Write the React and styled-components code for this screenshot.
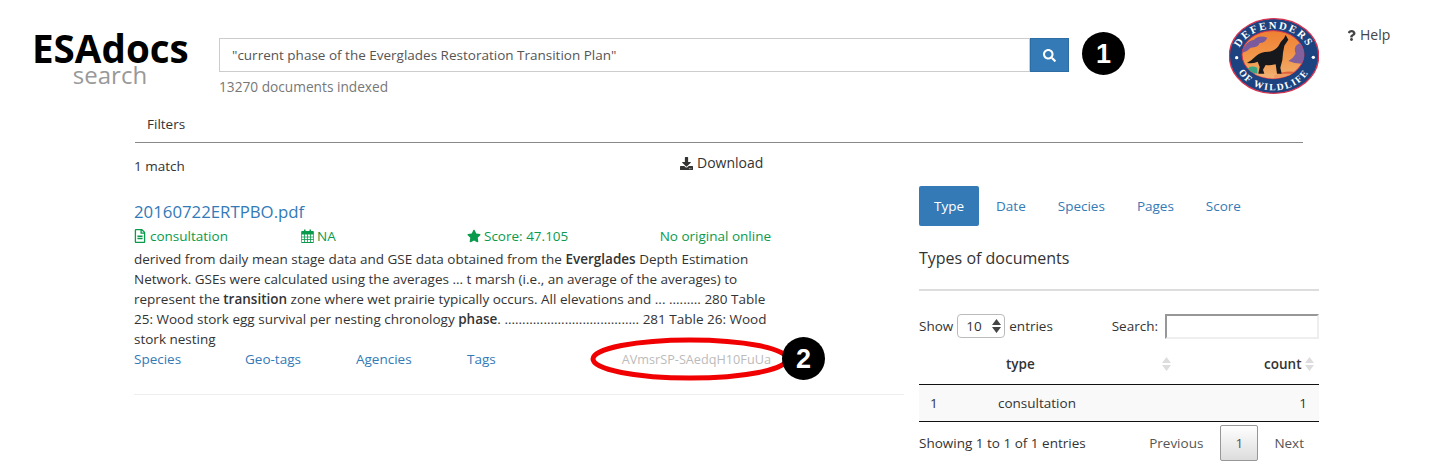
import React from 'react';
import styled, { createGlobalStyle } from 'styled-components';
import { FaSearch, FaRegFileAlt, FaStar, FaDownload, FaQuestion } from 'react-icons/fa';

const GlobalStyle = createGlobalStyle`
  html, body {
    margin: 0;
    background: #fff;
  }
  body {
    font-family: "Open Sans", "Liberation Sans", sans-serif;
    font-size: 13.5px;
    line-height: 20px;
    color: #333;
  }
`;

const Page = styled.div`
  position: relative;
  width: 1434px;
  height: 476px;
  overflow: hidden;
`;

const Header = styled.header`
  display: flex;
  align-items: flex-start;
  height: 104px;
  padding-left: 32px;
`;

const Brand = styled.div`
  width: 156px;
  margin-top: 26px;
  margin-right: 31px;
  text-align: center;
`;

const BrandName = styled.div`
  font-size: 38.6px;
  font-weight: 700;
  line-height: 44px;
  color: #000;
  white-space: nowrap;
`;

const BrandSub = styled.div`
  margin-top: -9px;
  font-size: 24px;
  line-height: 28px;
  color: #999;
`;

const SearchArea = styled.div`
  width: 850px;
  margin-top: 38px;
`;

const SearchRow = styled.div`
  display: flex;
`;

const SearchInput = styled.div`
  box-sizing: border-box;
  width: 811px;
  height: 34px;
  padding: 6px 12px;
  border: 1px solid #ccc;
  color: #555;
  white-space: nowrap;
`;

const SearchButton = styled.button`
  display: flex;
  align-items: center;
  justify-content: center;
  width: 39px;
  height: 34px;
  padding: 0;
  border: 1px solid #2e6da4;
  background: #337ab7;
  color: #fff;
  font-size: 13px;
`;

const Indexed = styled.div`
  margin-top: 5px;
  font-size: 13.7px;
  color: #777;
`;

const Badge = styled.div`
  display: flex;
  align-items: center;
  justify-content: center;
  flex: none;
  width: 43px;
  height: 43px;
  border-radius: 50%;
  background: #000;
  color: #fff;
  font-family: "Liberation Sans", Arial, sans-serif;
  font-size: 27px;
  font-weight: 700;
`;

const FirstBadge = styled(Badge)`
  margin-top: 32px;
  margin-left: 13px;
`;

const DefendersLogo = styled.svg`
  flex: none;
  width: 90px;
  height: 76px;
  margin-top: 18px;
  margin-left: 104px;
`;

const Help = styled.div`
  display: flex;
  align-items: center;
  gap: 3px;
  margin-top: 25px;
  margin-left: 27px;
  font-size: 14px;
  color: #444;
`;

const FilterBar = styled.div`
  width: 1168px;
  height: 38px;
  margin-left: 135px;
  border-bottom: 1px solid #888;
`;

const FilterTab = styled.div`
  padding: 10px 12px;
`;

const Main = styled.main`
  display: flex;
  margin-left: 134px;
`;

const ResultsColumn = styled.section`
  width: 770px;
  margin-right: 15px;
`;

const CountRow = styled.div`
  display: flex;
  width: 637px;
  height: 59px;
`;

const MatchCount = styled.div`
  width: 546px;
  padding-top: 13px;
`;

const Download = styled.div`
  display: flex;
  align-items: center;
  gap: 4px;
  height: 20px;
  padding-top: 10px;
  font-size: 14px;
`;

const Result = styled.article`
  height: 192px;
  border-bottom: 1px solid #eee;
`;

const ResultBody = styled.div`
  width: 637px;
`;

const Title = styled.a`
  display: block;
  font-size: 16.8px;
  line-height: 20px;
  color: #337ab7;
`;

const MetaRow = styled.div`
  display: grid;
  grid-template-columns: 167px 166px 1fr auto;
  margin-top: 4px;
  color: #0a9a4b;
`;

const MetaItem = styled.span`
  display: flex;
  align-items: center;
  gap: 3px;
`;

const FileIcon = styled(FaRegFileAlt)`
  width: 12px;
  height: 14px;
  margin-right: 1px;
`;

const CalendarIcon = styled.svg`
  width: 13px;
  height: 14px;
`;

const Snippet = styled.p`
  margin: 3px 0 0;
`;

const Hit = styled.b`
  font-weight: 600;
`;

const LinkRow = styled.div`
  display: grid;
  grid-template-columns: 111px 111px 111px 1fr auto;
  align-items: center;
`;

const TextLink = styled.a`
  color: #337ab7;
`;

const DocId = styled.span`
  font-size: 12.7px;
  color: #bbb;
`;

const StatsColumn = styled.aside`
  width: 400px;
  margin-top: 43px;
`;

const Pills = styled.nav`
  display: flex;
  gap: 2px;
`;

const Pill = styled.a`
  padding: 10px 15px;
  border-radius: 2px;
  color: ${(p) => (p.$active ? '#fff' : '#337ab7')};
  background: ${(p) => (p.$active ? '#337ab7' : 'transparent')};
`;

const StatsTitle = styled.h3`
  margin: 21px 0 0;
  padding-bottom: 20px;
  border-bottom: 2px solid #ddd;
  font-size: 16px;
  font-weight: 400;
  line-height: 22px;
`;

const TableTools = styled.div`
  display: flex;
  justify-content: space-between;
  align-items: center;
  margin-top: 22px;
  height: 26px;
`;

const ToolGroup = styled.label`
  display: flex;
  align-items: center;
  gap: 4px;
`;

const LengthSelect = styled.div`
  display: flex;
  align-items: center;
  justify-content: space-between;
  box-sizing: border-box;
  width: 48px;
  height: 24px;
  padding: 0 3px 0 8px;
  border: 1px solid #bbb;
  border-radius: 4px;
`;

const TableSearch = styled.input`
  box-sizing: border-box;
  width: 154px;
  height: 25px;
  margin-left: 3px;
  border: 2px solid;
  border-color: #979797 #eee #eee #979797;
  background: #fff;
`;

const Table = styled.table`
  width: 400px;
  margin-top: 6px;
  border-collapse: collapse;
  border-bottom: 1px solid #111;
`;

const HeadCell = styled.th`
  width: ${(p) => p.$width || 'auto'};
  height: 37px;
  padding: 0 0 2px;
  border-bottom: 1px solid #111;
  font-weight: 600;
  text-align: left;
`;

const HeadInner = styled.span`
  display: flex;
  align-items: center;
  justify-content: ${(p) => p.$justify || 'flex-start'};
  padding: ${(p) => p.$padding || '0'};
`;

const Row = styled.tr`
  background: #f9f9f9;
`;

const Cell = styled.td`
  height: 36px;
  padding: ${(p) => p.$padding || '0'};
  text-align: ${(p) => p.$align || 'left'};
`;

const TableFooter = styled.div`
  display: flex;
  justify-content: space-between;
  align-items: center;
  margin-top: 3px;
`;

const Pager = styled.div`
  display: flex;
  align-items: center;
`;

const PageLink = styled.span`
  padding: 0 15px;
  color: #555;
`;

const CurrentPage = styled.span`
  box-sizing: border-box;
  width: 38px;
  height: 36px;
  line-height: 34px;
  margin: 0 1px 0 2px;
  text-align: center;
  color: #555;
  border: 1px solid #979797;
  border-radius: 2px;
  background: linear-gradient(to bottom, #fff 0%, #dcdcdc 100%);
`;

const Ellipse = styled.svg`
  position: absolute;
  left: 588px;
  top: 334px;
  width: 210px;
  height: 50px;
`;

const SecondBadge = styled(Badge)`
  position: absolute;
  left: 782px;
  top: 337px;
`;

const SortIcon = ({ color = '#ddd' }) => (
  <svg width="9" height="16" viewBox="0 0 9 16">
    <path d="M4.5 1 L9 7 H0 Z M4.5 15 L0 9 H9 Z" fill={color} />
  </svg>
);

// FA4 style calendar, the package one has no grid
const Calendar = () => (
  <CalendarIcon viewBox="0 0 13 14">
    <path
      d="M1 2.5h11a.8.8 0 0 1 .8.8v9.4a.8.8 0 0 1-.8.8H1a.8.8 0 0 1-.8-.8V3.300a.8.8 0 0 1 .8-.8z"
      fill="none"
      stroke="currentColor"
    />
    <path d="M.5 3h12v2.500H.5z" fill="currentColor" />
    <path d="M3 .5h1.500V4H3zM8.500 .5H10V4H8.500z" fill="currentColor" />
    <path d="M.5 8h12M.5 10.500h12M3.500 5v8.500M6.500 5v8.500M9.500 5v8.500" stroke="currentColor" strokeWidth="0.8" />
  </CalendarIcon>
);

const Logo = () => (
  <DefendersLogo viewBox="40 23 270 228">
    <defs>
      <linearGradient id="sky" x1="0" y1="0" x2="0" y2="1">
        <stop offset="0" stopColor="#ee7f32" />
        <stop offset="0.6" stopColor="#f29a4e" />
        <stop offset="1" stopColor="#f0b072" />
      </linearGradient>
      <clipPath id="inner">
        <ellipse cx="172" cy="133" rx="93" ry="72" />
      </clipPath>
      <path id="topArc" d="M66 140 A108 85 0 0 1 282 140" />
      <path id="bottomArc" d="M58 146 A116 94 0 0 0 290 146" />
    </defs>
    <ellipse cx="175" cy="137" rx="134" ry="112" fill="#1c4380" stroke="#d8324f" strokeWidth="4" />
    <ellipse cx="172" cy="133" rx="93" ry="72" fill="url(#sky)" stroke="#d8324f" strokeWidth="3" />
    <g clipPath="url(#inner)">
      <path d="M78 128 Q88 92 115 88 Q130 72 155 82 Q148 98 132 98 Q128 112 105 112 Q95 124 78 128 Z" fill="#7a5a9c" />
      <path d="M268 96 L268 160 Q240 162 218 152 Q232 145 240 130 Q232 110 248 100 Z" fill="#83609c" />
      <path d="M90 186 Q100 160 125 172 L125 190 Z" fill="#3aa582" />
      <path d="M175 195 Q215 175 262 190 L240 215 H180 Z" fill="#e0623a" />
      <path d="M90 190 H270 V215 H90 Z" fill="#f0b072" opacity="0.75" />
    </g>
    <path
      d="M218 88 L210 74 L205 84 Q196 92 188 108 Q178 122 158 124 Q136 124 122 136 Q108 150 94 158 Q112 160 126 154 L132 170 L128 190 H146 L142 178 L150 164 Q166 166 180 162 L184 190 H198 L194 172 Q202 150 202 128 L206 106 Z"
      fill="#17181c"
    />
    <text fill="#fff" fontFamily="Liberation Serif, serif" fontWeight="700" fontSize="32" letterSpacing="6">
      <textPath href="#topArc" startOffset="50%" textAnchor="middle">DEFENDERS</textPath>
    </text>
    <text fill="#fff" fontFamily="Liberation Serif, serif" fontWeight="700" fontSize="29" letterSpacing="5">
      <textPath href="#bottomArc" startOffset="50%" textAnchor="middle">OF WILDLIFE</textPath>
    </text>
    <circle cx="63" cy="142" r="5" fill="#fff" />
    <circle cx="293" cy="141" r="5" fill="#fff" />
  </DefendersLogo>
);

export default function App() {
  return (
    <Page>
      <GlobalStyle />
      <Header>
        <Brand>
          <BrandName>ESAdocs</BrandName>
          <BrandSub>search</BrandSub>
        </Brand>
        <SearchArea>
          <SearchRow>
            <SearchInput>"current phase of the Everglades Restoration Transition Plan"</SearchInput>
            <SearchButton><FaSearch /></SearchButton>
          </SearchRow>
          <Indexed>13270 documents indexed</Indexed>
        </SearchArea>
        <FirstBadge>1</FirstBadge>
        <Logo />
        <Help><FaQuestion size={11} /> Help</Help>
      </Header>

      <FilterBar>
        <FilterTab>Filters</FilterTab>
      </FilterBar>

      <Main>
        <ResultsColumn>
          <CountRow>
            <MatchCount>1 match</MatchCount>
            <Download><FaDownload size={13} /> Download</Download>
          </CountRow>
          <Result>
            <ResultBody>
              <Title>20160722ERTPBO.pdf</Title>
              <MetaRow>
                <MetaItem><FileIcon /> consultation</MetaItem>
                <MetaItem><Calendar /> NA</MetaItem>
                <MetaItem><FaStar size={14} /> Score: 47.105</MetaItem>
                <span>No original online</span>
              </MetaRow>
              <Snippet>
                derived from daily mean stage data and GSE data obtained from the <Hit>Everglades</Hit> Depth Estimation
                Network. GSEs were calculated using the averages ... t marsh (i.e., an average of the averages) to
                represent the <Hit>transition</Hit> zone where wet prairie typically occurs. All elevations and ... ......... 280 Table
                25: Wood stork egg survival per nesting chronology <Hit>phase</Hit>. ...................................... 281 Table 26: Wood
                stork nesting
              </Snippet>
              <LinkRow>
                <TextLink>Species</TextLink>
                <TextLink>Geo-tags</TextLink>
                <TextLink>Agencies</TextLink>
                <TextLink>Tags</TextLink>
                <DocId>AVmsrSP-SAedqH10FuUa</DocId>
              </LinkRow>
            </ResultBody>
          </Result>
        </ResultsColumn>

        <StatsColumn>
          <Pills>
            <Pill $active>Type</Pill>
            <Pill>Date</Pill>
            <Pill>Species</Pill>
            <Pill>Pages</Pill>
            <Pill>Score</Pill>
          </Pills>
          <StatsTitle>Types of documents</StatsTitle>
          <TableTools>
            <ToolGroup>
              Show
              <LengthSelect>10 <SortIcon color="#444" /></LengthSelect>
              entries
            </ToolGroup>
            <ToolGroup>
              Search:
              <TableSearch />
            </ToolGroup>
          </TableTools>
          <Table>
            <thead>
              <tr>
                <HeadCell $width="79px" />
                <HeadCell>
                  <HeadInner $justify="space-between" $padding="0 0 0 8px">type <SortIcon /></HeadInner>
                </HeadCell>
                <HeadCell $width="148px">
                  <HeadInner $justify="flex-end" $padding="0 5px 0 0">count&nbsp;<SortIcon /></HeadInner>
                </HeadCell>
              </tr>
            </thead>
            <tbody>
              <Row>
                <Cell $padding="0 0 0 11px">1</Cell>
                <Cell>consultation</Cell>
                <Cell $align="right" $padding="0 12px 0 0">1</Cell>
              </Row>
            </tbody>
          </Table>
          <TableFooter>
            <span>Showing 1 to 1 of 1 entries</span>
            <Pager>
              <PageLink>Previous</PageLink>
              <CurrentPage>1</CurrentPage>
              <PageLink>Next</PageLink>
            </Pager>
          </TableFooter>
        </StatsColumn>
      </Main>

      <Ellipse viewBox="0 0 210 50">
        <ellipse cx="102" cy="25" rx="97" ry="19" fill="none" stroke="#f00000" strokeWidth="5" />
      </Ellipse>
      <SecondBadge>2</SecondBadge>
    </Page>
  );
}
